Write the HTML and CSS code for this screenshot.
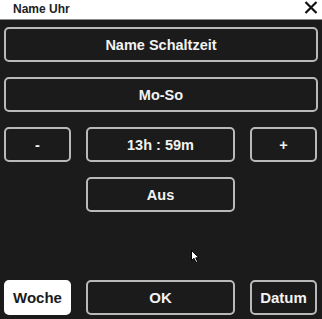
FILE: index.html
```html
<!DOCTYPE html>
<html lang="de">
<head>
    <meta charset="UTF-8">
    <meta name="viewport" content="width=device-width, initial-scale=1.0">
    <title>Name Uhr</title>
    <link rel="stylesheet" href="styles.css">
</head>
<body>

<div class="dialog">
    <div class="titlebar">
        <span class="title">Name Uhr</span>
        <button class="close" aria-label="Schließen">
            <svg width="14" height="13" viewBox="0 0 14 13">
                <path d="M1.5 1 L12.5 12 M12.5 1 L1.5 12" stroke="#111" stroke-width="2.2" fill="none"/>
            </svg>
        </button>
    </div>

    <div class="content">
        <button class="btn wide">Name Schaltzeit</button>
        <button class="btn wide">Mo-So</button>

        <div class="row">
            <button class="btn">-</button>
            <button class="btn">13h : 59m</button>
            <button class="btn">+</button>
        </div>

        <div class="row">
            <span></span>
            <button class="btn">Aus</button>
            <span></span>
        </div>

        <div class="row bottom">
            <button class="btn active">Woche</button>
            <button class="btn">OK</button>
            <button class="btn">Datum</button>
        </div>
    </div>

    <svg class="cursor" width="10" height="14" viewBox="0 0 10 14">
        <path d="M0.5 0.5 L0.5 10.5 L3 8.3 L5 12.5 L6.6 11.7 L4.7 7.8 L8 7.8 Z" fill="#fff" stroke="#000" stroke-width="1"/>
    </svg>
</div>

</body>
</html>
```

FILE: styles.css
```css
body {
    margin: 0;
    background-color: #1b1b1b;
    font-family: 'Liberation Sans', Arial, sans-serif;
}
.dialog {
    position: relative;
    height: 319px;
    display: flex;
    flex-direction: column;
    overflow: hidden;
}
.titlebar {
    height: 20px;
    background-color: #ffffff;
    border-bottom: 1px solid #8a8a8a;
    display: flex;
    align-items: center;
    justify-content: space-between;
    padding: 0 4px 0 13px;
    box-sizing: border-box;
    flex-shrink: 0;
}
.title {
    font-size: 12px;
    font-weight: bold;
    color: #222;
    margin-top: -2px;
}
.close {
    background: none;
    border: none;
    padding: 0;
    width: 14px;
    height: 13px;
    margin-top: -5px;
    display: flex;
}
.content {
    flex: 1;
    display: flex;
    flex-direction: column;
    gap: 15px;
    padding: 7px 4px 4px 4px;
}
.btn {
    height: 35px;
    background-color: #1b1b1b;
    color: #f2f2f2;
    border: 2px solid #b9b9b9;
    border-radius: 5px;
    font-family: 'Liberation Sans', Arial, sans-serif;
    font-size: 14.5px;
    font-weight: bold;
    padding: 0;
    cursor: pointer;
}
.btn.wide {
    width: 314px;
}
.row {
    display: grid;
    grid-template-columns: 67px 149px 67px;
    column-gap: 15px;
}
.row.bottom {
    margin-top: auto;
}
.row.bottom .btn {
    font-size: 15px;
}
.btn.active {
    background-color: #ffffff;
    color: #1b1b1b;
    border-color: #ffffff;
}
.cursor {
    position: absolute;
    left: 191px;
    top: 250px;
}
```
